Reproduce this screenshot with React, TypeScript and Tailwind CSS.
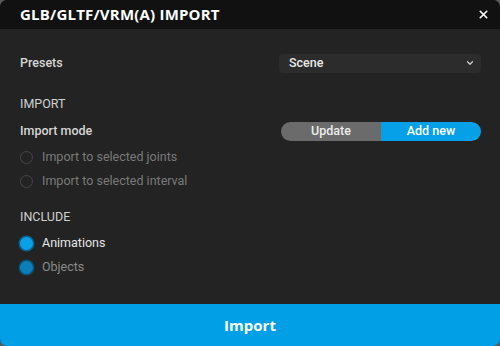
import React from "react";
import { X, ChevronDown } from "lucide-react";

function Radio({ label, state }: { label: string; state: "off" | "on" | "dim" }) {
  return (
    <div className="flex items-center h-[23.5px]">
      {state === "off" && (
        <span className="w-[13px] h-[13px] rounded-full border border-[#464646] ml-[20px]" />
      )}
      {state === "on" && (
        <span className="w-[13px] h-[13px] rounded-full bg-[#0aa0e8] ring-[1.5px] ring-[#0b5f8a] ml-[20px]" />
      )}
      {state === "dim" && (
        <span className="w-[13px] h-[13px] rounded-full bg-[#0c7fb8] ring-[1.5px] ring-[#0b4f72] ml-[20px]" />
      )}
      <span
        className={
          "ml-[9px] text-[12.5px] " +
          (state === "on" ? "text-[#e6e6e6]" : state === "dim" ? "text-[#8a8a8a]" : "text-[#7a7a7a]")
        }
      >
        {label}
      </span>
    </div>
  );
}

export default function App() {
  return (
    <div className="w-[500px] h-[346px] bg-[#5a5a5a] font-['Roboto',sans-serif]">
      <div className="w-full h-full bg-[#232323] rounded-[7px] overflow-hidden flex flex-col">
        {/* header */}
        <div className="h-[29px] bg-[#111111] flex items-center justify-between px-[20px] shrink-0">
          <h1 className="text-[15px] font-bold text-white tracking-[0.2px] font-['Open_Sans',sans-serif]">
            GLB/GLTF/VRM(A) IMPORT
          </h1>
          <X size={13} strokeWidth={3} className="text-white -mr-[10px]" />
        </div>

        {/* body */}
        <div className="flex-1 flex flex-col pt-[24px]">
          <div className="flex items-center justify-between pl-[20px] pr-[19px] h-[20px]">
            <span className="text-[12.5px] text-[#d6d6d6] font-medium">Presets</span>
            <div className="w-[202px] h-[19px] bg-[#2c2c2c] rounded-[4px] flex items-center justify-between pl-[10px] pr-[6px]">
              <span className="text-[12.5px] font-medium text-[#e8e8e8]">Scene</span>
              <ChevronDown size={10} strokeWidth={3} className="text-[#cfcfcf]" />
            </div>
          </div>

          <div className="pl-[20px] mt-[21px] text-[12.5px] text-[#d0d0d0] h-[20px] flex items-center">IMPORT</div>

          <div className="flex items-center justify-between pl-[20px] pr-[19px] mt-[7px] h-[20px]">
            <span className="text-[12.5px] text-[#d6d6d6] font-medium">Import mode</span>
            <div className="w-[200px] h-[19px] rounded-full overflow-hidden flex">
              <div className="flex-1 bg-[#6b6b6b] flex items-center justify-center text-[12.5px] font-medium text-[#ececec]">
                Update
              </div>
              <div className="flex-1 bg-[#05a0e8] flex items-center justify-center text-[12.5px] font-medium text-white">
                Add new
              </div>
            </div>
          </div>

          <div className="mt-[5px]">
            <Radio label="Import to selected joints" state="off" />
            <Radio label="Import to selected interval" state="off" />
          </div>

          <div className="pl-[20px] mt-[14px] text-[12.5px] text-[#d0d0d0] h-[20px] flex items-center">INCLUDE</div>

          <div className="mt-[5px]">
            <Radio label="Animations" state="on" />
            <Radio label="Objects" state="dim" />
          </div>
        </div>

        {/* footer */}
        <button className="h-[42px] shrink-0 bg-[#009fe6] text-white text-[15px] font-bold font-['Open_Sans',sans-serif]">
          Import
        </button>
      </div>
    </div>
  );
}
